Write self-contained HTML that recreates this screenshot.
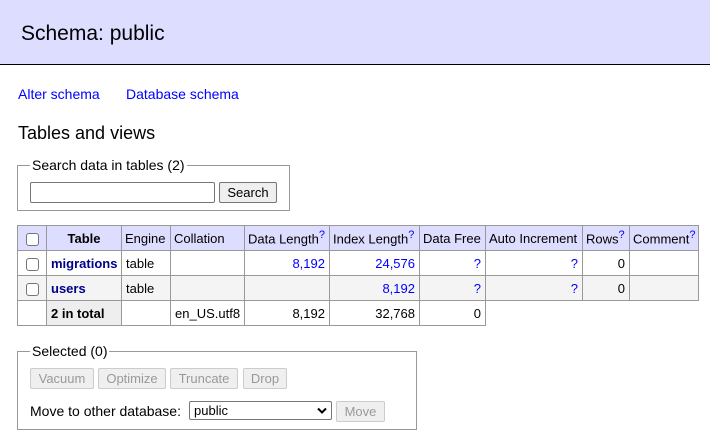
<!DOCTYPE html>
<html><head><meta charset="utf-8"><style>
*{box-sizing:border-box}
body{margin:0;width:710px;height:434px;overflow:hidden;background:#fff;font-family:"Liberation Sans",sans-serif;font-size:13px;color:#000;position:relative}
.hdr{position:absolute;left:0;top:0;width:710px;height:65px;background:#ddf;border-bottom:1px solid #000}
.hdr h2{position:absolute;left:21px;top:22px;margin:0;font-size:21px;font-weight:normal}
a{color:#00f;text-decoration:none}
.abs{position:absolute}
fieldset{position:absolute;margin:0;padding:0;border:1px solid #999}
legend{padding:0 2px;margin-left:12px;font-size:14px}
table{position:absolute;left:17px;top:225px;width:681px;border-collapse:collapse;table-layout:fixed;font-size:13px}
td,th{border:1px solid #999;padding:0 4px;height:25px;white-space:nowrap;overflow:hidden}
th{background:#ddf;font-weight:normal;text-align:left;padding:0 3px}
th sup,td sup{color:#00f;font-size:11px}
.r{text-align:right}
.b{font-weight:bold}
tr.odd td{background:#fff}
tr.even td{background:#f4f4f4}
td.tb,th.tb{background:#eee}
.cb{display:inline-block;width:13px;height:13px;border:1px solid #767676;border-radius:3px;background:#fff;vertical-align:middle}
.btn{position:absolute;height:21px;border:1px solid #ccc;background:#efefef;color:#999;font-size:13px;line-height:19px;text-align:center;border-radius:2px}
</style></head><body>
<div class="hdr"><h2>Schema: public</h2></div>
<a class="abs" style="left:18px;top:86px;font-size:14px">Alter schema</a>
<a class="abs" style="left:126px;top:86px;font-size:14px">Database schema</a>
<div class="abs" style="left:18px;top:123px;font-size:18px">Tables and views</div>
<fieldset style="left:17px;top:157px;width:273px;height:54px"><legend>Search data in tables (2)</legend></fieldset>
<div class="abs" style="left:30px;top:182px;width:185px;height:21px;border:1px solid #767676;border-radius:2px"></div>
<div class="abs" style="left:219px;top:182px;width:58px;height:21px;border:1px solid #767676;background:#efefef;border-radius:2px;text-align:center;line-height:19px">Search</div>
<table>
<colgroup><col style="width:29px"><col style="width:75px"><col style="width:49px"><col style="width:74px"><col style="width:85px"><col style="width:90px"><col style="width:66px"><col style="width:97px"><col style="width:47px"><col style="width:69px"></colgroup>
<tr><th style="text-align:center"><span class="cb"></span></th><th class="b" style="text-align:center;font-weight:bold">Table</th><th>Engine</th><th>Collation</th><th>Data Length<sup>?</sup></th><th>Index Length<sup>?</sup></th><th>Data Free</th><th>Auto Increment</th><th>Rows<sup>?</sup></th><th>Comment<sup>?</sup></th></tr>
<tr class="odd"><td style="text-align:center"><span class="cb"></span></td><td class="tb b"><a style="color:#00008b">migrations</a></td><td>table</td><td></td><td class="r"><a>8,192</a></td><td class="r"><a>24,576</a></td><td class="r"><a>?</a></td><td class="r"><a>?</a></td><td class="r">0</td><td></td></tr>
<tr class="even"><td style="text-align:center"><span class="cb"></span></td><td class="tb b"><a style="color:#00008b">users</a></td><td>table</td><td></td><td></td><td class="r"><a>8,192</a></td><td class="r"><a>?</a></td><td class="r"><a>?</a></td><td class="r">0</td><td></td></tr>
<tr><td style="height:21px"></td><td class="tb b" style="height:21px">2 in total</td><td></td><td>en_US.utf8</td><td class="r">8,192</td><td class="r">32,768</td><td class="r">0</td><td style="border:none"></td><td style="border:none"></td><td style="border:none"></td></tr>
</table>
<fieldset style="left:17px;top:343px;width:400px;height:87px"><legend>Selected (0)</legend></fieldset>
<div class="btn" style="left:30px;top:368px;width:64px">Vacuum</div>
<div class="btn" style="left:98px;top:368px;width:68px">Optimize</div>
<div class="btn" style="left:170px;top:368px;width:68px">Truncate</div>
<div class="btn" style="left:243px;top:368px;width:44px">Drop</div>
<div class="abs" style="left:30px;top:403px;font-size:14px">Move to other database:</div>
<div class="abs" style="left:189px;top:401px;width:143px;height:19px;border:1px solid #767676;border-radius:2px;padding-left:4px;font-size:13px;line-height:17px">public<svg style="position:absolute;right:4px;top:5px" width="10" height="7" viewBox="0 0 10 7"><path d="M1 1.5L5 5.5L9 1.5" stroke="#000" stroke-width="2" fill="none"/></svg></div>
<div class="btn" style="left:336px;top:401px;width:49px">Move</div>
</body></html>
